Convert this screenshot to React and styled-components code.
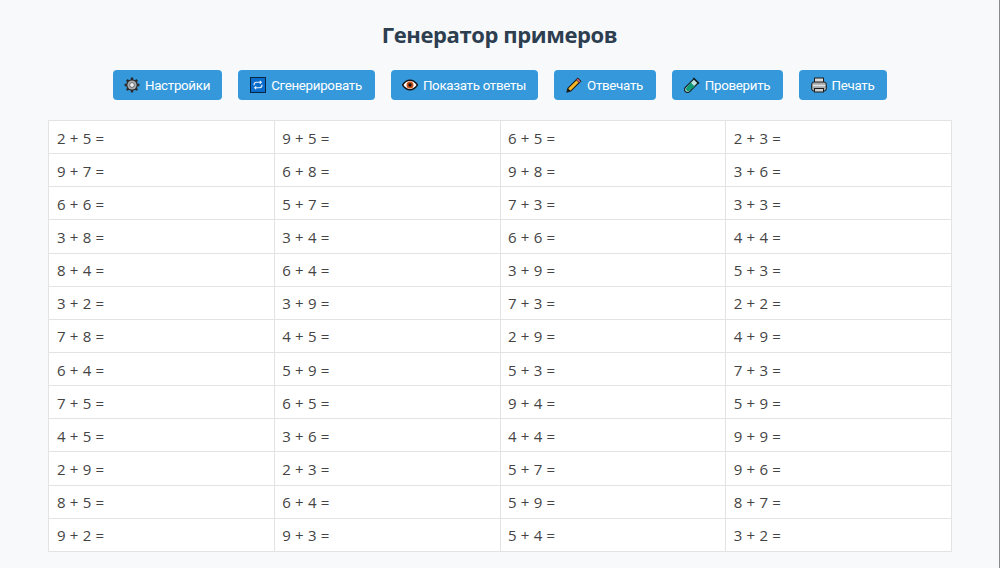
import React from 'react';
import styled, { createGlobalStyle } from 'styled-components';

const GlobalStyle = createGlobalStyle`
  html, body {
    margin: 0;
    padding: 0;
    background: #f8f9fa;
    font-family: "Open Sans", "Noto Sans", sans-serif;
    color: #333;
  }
`;

const Page = styled.div`
  box-sizing: border-box;
  height: 568px;
  padding: 18px 48px 0;
  overflow: hidden;
  border-right: 1px solid #8a8a8a;
`;

const Title = styled.h1`
  margin: 0 0 18.5px;
  font-size: 22px;
  line-height: 33px;
  font-weight: 700;
  letter-spacing: -0.4px;
  text-align: center;
  color: #2c3e50;
`;

const Toolbar = styled.div`
  display: flex;
  justify-content: center;
  gap: 16px;
  margin-bottom: 20px;
`;

const Button = styled.button`
  display: flex;
  align-items: center;
  justify-content: center;
  gap: 5px;
  box-sizing: border-box;
  width: ${({ $w }) => $w}px;
  height: 30.5px;
  padding: 1px 0 0;
  border: none;
  border-radius: 4px;
  background: #3498db;
  color: #fff;
  font-family: Roboto, Inter, sans-serif;
  font-size: 13.33px;
  letter-spacing: -0.3px;
`;

const Icon = styled.svg`
  width: 16px;
  height: 16px;
  flex: none;
`;

const Sheet = styled.table`
  width: 904px;
  border-collapse: collapse;
  table-layout: fixed;
  background: #fff;
`;

const Cell = styled.td`
  box-sizing: border-box;
  height: 33.15px;
  padding: 1px 7.5px 0;
  border: 1px solid #e2e3e5;
  font-size: 15px;
  letter-spacing: 0.2px;
  color: #444;

  &:first-child {
    padding-left: 8px;
  }
`;

const GearIcon = () => (
  <Icon viewBox="0 0 16 16">
    <circle cx="8" cy="8" r="5.800" fill="#2a2a2a" />
    <path
      d="M8 .6v14.800M.6 8h14.800M2.800 2.800l10.400 10.400M13.200 2.800 2.800 13.200"
      stroke="#2a2a2a"
      strokeWidth="2.400"
    />
    <circle cx="8" cy="8" r="4.600" fill="#a9adb2" />
    <circle cx="8" cy="8" r="2.400" fill="#f2f2f2" stroke="#555" strokeWidth=".8" />
  </Icon>
);

const RepeatIcon = () => (
  <Icon viewBox="0 0 16 16">
    <rect x=".5" y=".5" width="15" height="15" fill="#0a6ccb" stroke="#0a2540" />
    <path
      d="M4 8.200C4 6.200 5 5.200 6.500 5.200H11M9.800 3.800 11.300 5.200 9.800 6.600M12 7.800C12 9.800 11 10.800 9.500 10.800H5M6.200 9.400 4.700 10.800 6.200 12.200"
      fill="none"
      stroke="#e8f2fb"
      strokeWidth="1.100"
    />
  </Icon>
);

const EyeIcon = () => (
  <Icon viewBox="0 0 16 16">
    <path d="M.5 8C3 4.300 5.500 3.200 8 3.200s5 1.100 7.500 4.800C13 11.700 10.500 12.800 8 12.800S3 11.700.5 8z" fill="#fff" stroke="#151515" strokeWidth="1.500" />
    <circle cx="8" cy="8" r="3.500" fill="#c9521c" />
    <circle cx="8" cy="8" r="1.700" fill="#111" />
  </Icon>
);

const PencilIcon = () => (
  <Icon viewBox="0 0 16 16">
    <path d="M1 15l.9-3.800L11.800 1.300l2.900 2.900-9.900 9.900z" fill="#f6b726" stroke="#1c1c1c" strokeWidth="1.100" />
    <path d="M11.800 1.300l2.900 2.900-1.500 1.500-2.900-2.900z" fill="#e8697a" stroke="#1c1c1c" strokeWidth=".8" />
    <path d="M1 15l.9-3.800 2.900 2.900z" fill="#1c1c1c" />
  </Icon>
);

const TubeIcon = () => (
  <Icon viewBox="0 0 16 16">
    <path d="M10.200 1.600l4.200 4.200-8.800 8.800a2.900 2.900 0 0 1-4.200-4.200z" fill="#bfe3e4" stroke="#152525" strokeWidth="1.300" />
    <path d="M6.800 5.400l4 4-5.200 4.200a2.100 2.100 0 0 1-3-3z" fill="#0d9a74" />
    <path d="M9.200 1l5.800 5.800" stroke="#152525" strokeWidth="1.500" />
  </Icon>
);

const PrinterIcon = () => (
  <Icon viewBox="0 0 16 16">
    <rect x="3.500" y="1" width="9" height="6" fill="#d9d9d9" stroke="#1c1c1c" />
    <rect x=".7" y="5" width="14.600" height="9" rx="2.200" fill="#a6abae" stroke="#1c1c1c" />
    <rect x="3.500" y="11.500" width="9" height="3.500" fill="#cfcfcf" stroke="#1c1c1c" />
    <path d="M2 8.500h12" stroke="#e6e6e6" strokeWidth="1.400" />
  </Icon>
);

const buttons = [
  { label: 'Настройки', width: 109, icon: <GearIcon /> },
  { label: 'Сгенерировать', width: 137, icon: <RepeatIcon /> },
  { label: 'Показать ответы', width: 147, icon: <EyeIcon /> },
  { label: 'Отвечать', width: 102, icon: <PencilIcon /> },
  { label: 'Проверить', width: 111, icon: <TubeIcon /> },
  { label: 'Печать', width: 88, icon: <PrinterIcon /> },
];

const rows = [
  ['2 + 5 =', '9 + 5 =', '6 + 5 =', '2 + 3 ='],
  ['9 + 7 =', '6 + 8 =', '9 + 8 =', '3 + 6 ='],
  ['6 + 6 =', '5 + 7 =', '7 + 3 =', '3 + 3 ='],
  ['3 + 8 =', '3 + 4 =', '6 + 6 =', '4 + 4 ='],
  ['8 + 4 =', '6 + 4 =', '3 + 9 =', '5 + 3 ='],
  ['3 + 2 =', '3 + 9 =', '7 + 3 =', '2 + 2 ='],
  ['7 + 8 =', '4 + 5 =', '2 + 9 =', '4 + 9 ='],
  ['6 + 4 =', '5 + 9 =', '5 + 3 =', '7 + 3 ='],
  ['7 + 5 =', '6 + 5 =', '9 + 4 =', '5 + 9 ='],
  ['4 + 5 =', '3 + 6 =', '4 + 4 =', '9 + 9 ='],
  ['2 + 9 =', '2 + 3 =', '5 + 7 =', '9 + 6 ='],
  ['8 + 5 =', '6 + 4 =', '5 + 9 =', '8 + 7 ='],
  ['9 + 2 =', '9 + 3 =', '5 + 4 =', '3 + 2 ='],
];

const App = () => (
  <>
    <GlobalStyle />
    <Page>
      <Title>Генератор примеров</Title>
      <Toolbar>
        {buttons.map((b) => (
          <Button key={b.label} $w={b.width}>
            {b.icon}
            <span>{b.label}</span>
          </Button>
        ))}
      </Toolbar>
      <Sheet>
        <tbody>
          {rows.map((row, i) => (
            <tr key={i}>
              {row.map((cell, j) => (
                <Cell key={j}>{cell}</Cell>
              ))}
            </tr>
          ))}
        </tbody>
      </Sheet>
    </Page>
  </>
);

export default App;
